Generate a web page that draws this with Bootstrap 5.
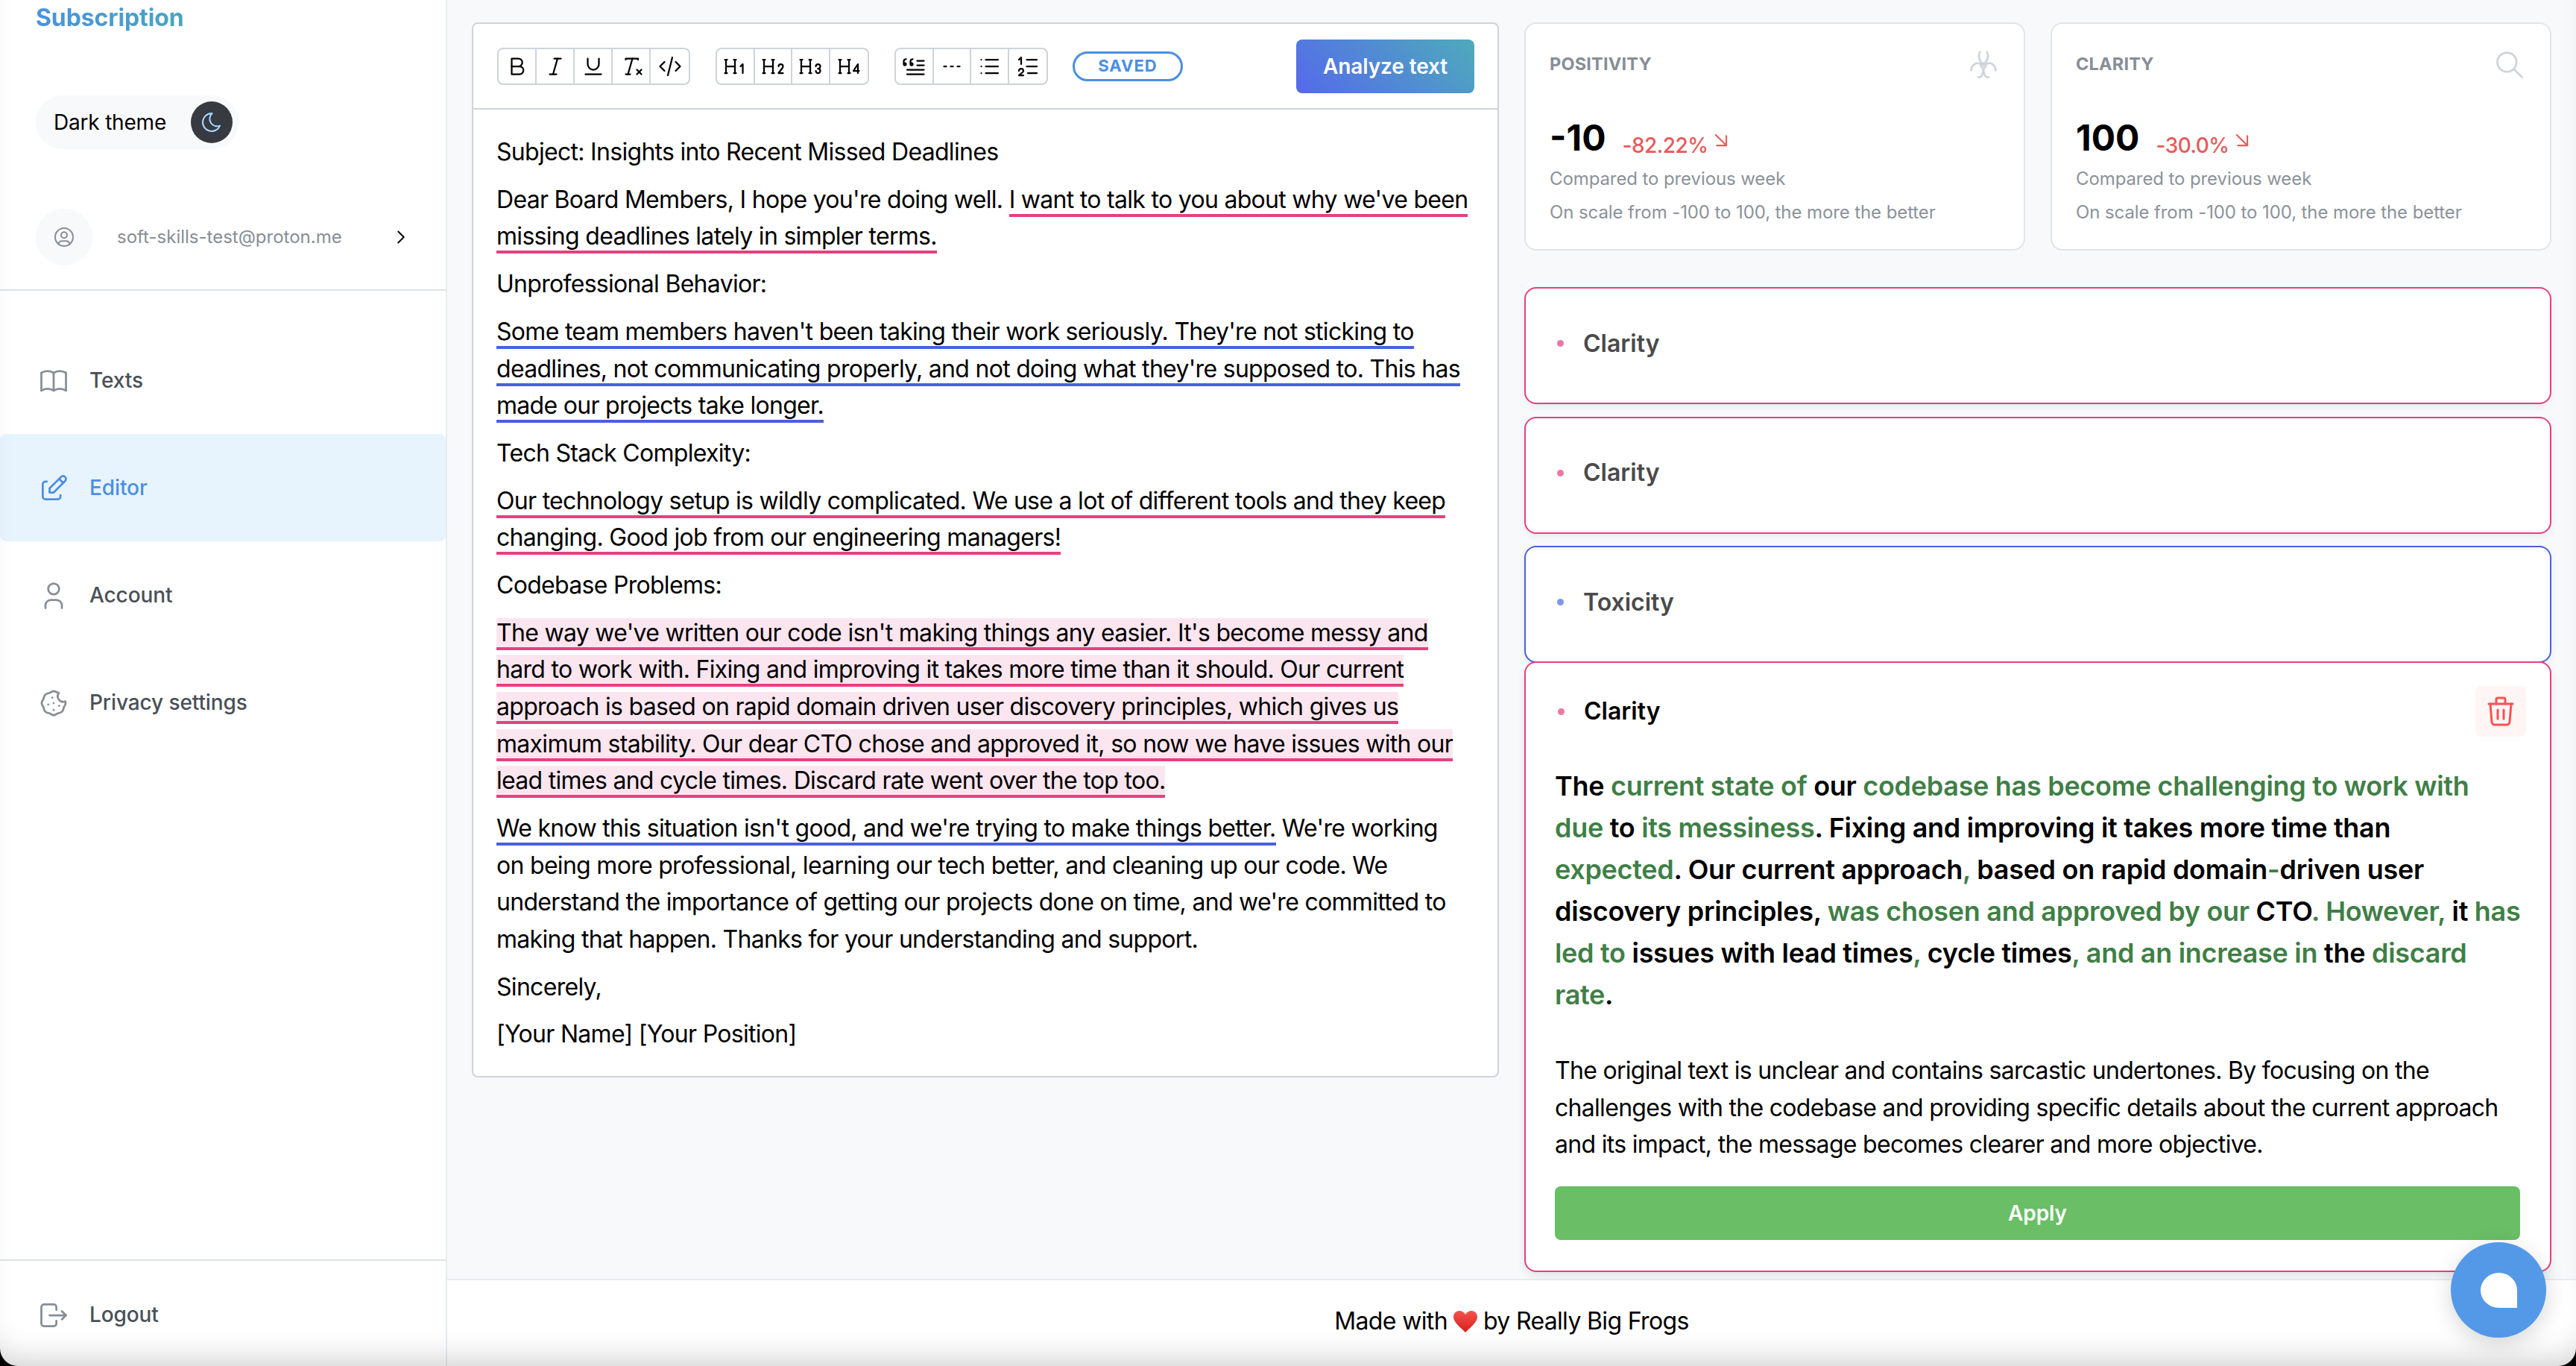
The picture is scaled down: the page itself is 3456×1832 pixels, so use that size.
<!doctype html>
<html lang="en">
<head>
<meta charset="utf-8">
<title>Editor</title>
<link href="https://cdn.jsdelivr.net/npm/bootstrap@5.3.0/dist/css/bootstrap.min.css" rel="stylesheet">
<style>
html,body{height:100%;overflow:hidden}
body{font-family:Inter,"Liberation Sans",sans-serif;font-size:32px;line-height:1.55;background:#f8f9fa;color:#000}
svg.tb{fill:none;stroke:currentColor;stroke-width:1.5;stroke-linecap:round;stroke-linejoin:round;flex:none}
.app-shell{height:1832px}
.side-bar{width:600px;flex:none;background:#fff;border-right:2px solid #e9ecef}
.sub-link{font-size:32px;font-weight:700;line-height:48px;height:46px;margin-left:48px;width:max-content;background:linear-gradient(45deg,#4a8fe2,#47a8bb);-webkit-background-clip:text;background-clip:text;color:transparent;letter-spacing:-.1px}
.theme-pill{margin:82px 0 0 48px;width:272px;height:72px;background:#f8f9fa;border-radius:36px;padding:2px 8px 0 24px;font-size:28px;letter-spacing:-.2px}
.moon-dot{width:56px;height:56px;background:#373a40;border-radius:50%;color:#a5d8ff;margin-top:-2px}
.user-row{margin:80px 0 0 48px;height:76px}
.user-dot{width:76px;height:76px;background:#f8f9fa;border-radius:50%;color:#868e96}
.user-mail{font-size:24px;color:#868e96;margin-left:33px;width:366px}
.side-head{border-bottom:2px solid #dee2e6;padding-bottom:32px}
.nav-rows{margin-top:48px}
.nav-line{height:144px;padding:2px 0 0 50px;gap:26px;font-size:28px;font-weight:500;color:#495057;text-decoration:none;border-radius:8px;letter-spacing:-.1px}
.nav-line svg{color:#868e96}
.nav-line.is-on{background:#e8f4fd;color:#4a8fe2}
.nav-line.is-on svg{color:#4a8fe2}
.side-foot{border-top:2px solid #dee2e6;height:143px}
.side-foot .nav-line{height:143px}
.work-area{padding:30px 33px 0;gap:34px;min-height:0}
.work-col{flex:1 1 0;min-width:0}
.edit-card{border:2px solid #ced4da;border-radius:8px;background:#fff}
.edit-bar{height:115px;padding:0 31px 0 32px;border-bottom:2px solid #ced4da}
.tool-set{border:2px solid #ced4da;border-radius:8px;margin-right:34px;height:50px;background:#fff}
.tool-set.end-set{margin-right:33px}
.tool-key{width:50.5px;display:flex;align-items:center;justify-content:center;border-right:2px solid #ced4da;color:#000}
.tool-key:last-child{border-right:0}
.tool-set.wide .tool-key{width:51px}
.save-tag{width:148px;height:40px;border:3px solid #4a8fe2;border-radius:20px;color:#4a8fe2;font-size:22px;font-weight:700;letter-spacing:1px;background:#fff}
.go-btn{margin-left:auto;width:239px;height:72px;border:0;border-radius:8px;color:#fff;font-size:28px;font-weight:600;background:linear-gradient(45deg,#5569ec,#4eabbb);letter-spacing:-.1px}
.edit-body{padding:32px 31px 31px;letter-spacing:-.7px}
.edit-body p{margin:0 0 14.2px}
.edit-body p:last-child{margin:0}
.hl-pink{border-bottom:4px solid #e64080}
.hl-blue{border-bottom:4px solid #4c5fdc}
.hl-fill{background:#fbe6ef}
.stat-row{gap:34px;margin-bottom:49px}
.stat-box{flex:1 1 0;height:306px;border:2px solid #e1e4e8;border-radius:16px;background:#fff;padding:32px;display:block}
.stat-head{height:44px;color:#ced4da;padding-top:1px}
.stat-name{font-size:23.5px;font-weight:700;color:#868e96;letter-spacing:.2px}
.stat-val{font-size:48px;font-weight:700;line-height:60px;margin-top:47px;gap:22px}
.stat-diff{font-size:28px;font-weight:500;color:#e85a5a;line-height:40px;letter-spacing:-.5px}
.stat-diff svg{margin:-14px 0 0 0}
.stat-note{font-size:24px;color:#8b929a;line-height:37px;margin-top:8px;letter-spacing:-.1px}
.stat-note.first{margin-top:6px}
.issue-box{border:2px solid #e64080;border-radius:16px;background:#fff;height:157px;margin-bottom:16.5px;padding:0 37px 6px 42px;font-size:32px;font-weight:600;color:#4a4a4a;box-shadow:0 4px 10px rgba(0,0,0,.06)}
.issue-box.ind{border-color:#4c5fdc;margin-bottom:-2px}
.issue-box .pip{width:9px;height:9px;border-radius:50%;background:#ee77a6;margin-right:26px}
.issue-box.ind .pip{background:#7f96ef}
.issue-open{position:relative;border:2px solid #e64080;border-radius:16px;background:#fff;height:819px;padding:31px 40px 0 39px;box-shadow:0 6px 12px rgba(0,0,0,.08);letter-spacing:-.7px}
.open-head{font-size:32px;font-weight:600;height:68px;letter-spacing:0}
.open-head .pip{width:9px;height:9px;border-radius:50%;background:#ee77a6;margin-right:26px;margin-left:4px}
.bin-btn{margin-left:auto;width:68px;height:68px;background:#fff5f5;border-radius:8px;color:#fa5252;margin-right:-8px}
.fix-text{font-size:36px;font-weight:600;line-height:56px;margin:38px -7px 49px 0;color:#000;letter-spacing:-.3px}
.fix-text span{color:#3f7f46}
.why-text{margin:0}
.ok-btn{width:100%;height:72px;margin-top:31px;border:0;border-radius:8px;background:#69be66;color:#fff;font-size:28px;font-weight:600;display:block;letter-spacing:-.1px}
.page-foot{height:117px;flex:none;background:#fff;border-top:2px solid #e9ecef;padding-bottom:5px;letter-spacing:-.65px}
.heart-ico{margin:0 7px}
.chat-bub{position:fixed;right:40px;bottom:38px;width:128px;height:128px;border-radius:50%;background:#5499e8;box-shadow:0 8px 30px rgba(0,0,0,.16);z-index:5}
.chat-bub i{display:block;width:49px;height:47px;background:#fff;border-radius:50% 50% 0 50%}
.win-edge{position:fixed;inset:0;border-radius:0 0 24px 24px;box-shadow:0 0 0 30px #000,inset 0 -34px 44px -28px rgba(0,0,0,.2);pointer-events:none;z-index:9}
</style>
</head>
<body>
<div class="app-shell d-flex">
  <aside class="side-bar d-flex flex-column">
    <div class="side-head">
      <div class="sub-link">Subscription</div>
      <div class="theme-pill d-flex align-items-center justify-content-between">
        <span>Dark theme</span>
        <span class="moon-dot d-flex align-items-center justify-content-center">
          <svg class="tb" width="32" height="32" viewBox="0 0 24 24"><path d="M12 3c.132 0 .263 0 .393 0a7.5 7.5 0 0 0 7.92 12.446a9 9 0 1 1 -8.313 -12.454z"/></svg>
        </span>
      </div>
      <div class="user-row d-flex align-items-center">
        <span class="user-dot d-flex align-items-center justify-content-center">
          <svg class="tb" width="32" height="32" viewBox="0 0 24 24"><path d="M12 12m-9 0a9 9 0 1 0 18 0a9 9 0 1 0 -18 0"/><path d="M12 10m-3 0a3 3 0 1 0 6 0a3 3 0 1 0 -6 0"/><path d="M6.168 18.849a4 4 0 0 1 3.832 -2.849h4a4 4 0 0 1 3.834 2.855"/></svg>
        </span>
        <span class="user-mail">soft-skills-test@proton.me</span>
        <svg class="tb" width="30" height="30" viewBox="0 0 24 24"><path d="M9 6l6 6l-6 6"/></svg>
      </div>
    </div>
    <nav class="nav-rows flex-grow-1">
      <a class="nav-line d-flex align-items-center" href="#"><svg class="tb" width="44" height="44" viewBox="0 0 24 24"><path d="M3 19a9 9 0 0 1 9 0a9 9 0 0 1 9 0"/><path d="M3 6a9 9 0 0 1 9 0a9 9 0 0 1 9 0"/><path d="M3 6l0 13"/><path d="M12 6l0 13"/><path d="M21 6l0 13"/></svg>Texts</a>
      <a class="nav-line is-on d-flex align-items-center" href="#"><svg class="tb" width="44" height="44" viewBox="0 0 24 24"><path d="M7 7h-1a2 2 0 0 0 -2 2v9a2 2 0 0 0 2 2h9a2 2 0 0 0 2 -2v-1"/><path d="M20.385 6.585a2.1 2.1 0 0 0 -2.97 -2.97l-8.415 8.385v3h3l8.385 -8.415z"/><path d="M16 5l3 3"/></svg>Editor</a>
      <a class="nav-line d-flex align-items-center" href="#"><svg class="tb" width="44" height="44" viewBox="0 0 24 24"><path d="M8 7a4 4 0 1 0 8 0a4 4 0 0 0 -8 0"/><path d="M6 21v-2a4 4 0 0 1 4 -4h4a4 4 0 0 1 4 4v2"/></svg>Account</a>
      <a class="nav-line d-flex align-items-center" href="#"><svg class="tb" width="44" height="44" viewBox="0 0 24 24"><path d="M8 13v.01"/><path d="M12 17v.01"/><path d="M12 12v.01"/><path d="M16 14v.01"/><path d="M11 8v.01"/><path d="M13.148 3.476l2.667 1.104a4 4 0 0 0 4.656 6.14l.053 .132a3 3 0 0 1 0 2.296c-.497 .786 -.838 1.404 -1.024 1.852c-.189 .456 -.409 1.194 -.66 2.216a3 3 0 0 1 -1.624 1.623c-1.048 .263 -1.787 .483 -2.216 .661c-.475 .197 -1.092 .538 -1.852 1.024a3 3 0 0 1 -2.296 0c-.802 -.503 -1.419 -.844 -1.852 -1.024c-.471 -.195 -1.21 -.415 -2.216 -.66a3 3 0 0 1 -1.623 -1.624c-.265 -1.052 -.485 -1.79 -.661 -2.216c-.198 -.479 -.54 -1.096 -1.024 -1.852a3 3 0 0 1 0 -2.296c.48 -.744 .82 -1.361 1.024 -1.852c.171 -.413 .391 -1.152 .66 -2.216a3 3 0 0 1 1.624 -1.623c1.032 -.256 1.77 -.476 2.216 -.661c.458 -.19 1.075 -.531 1.852 -1.024a3 3 0 0 1 2.296 0z"/></svg>Privacy settings</a>
    </nav>
    <div class="side-foot">
      <a class="nav-line d-flex align-items-center" href="#"><svg class="tb" width="44" height="44" viewBox="0 0 24 24"><path d="M14 8v-2a2 2 0 0 0 -2 -2h-7a2 2 0 0 0 -2 2v12a2 2 0 0 0 2 2h7a2 2 0 0 0 2 -2v-2"/><path d="M9 12h12l-3 -3"/><path d="M18 15l3 -3"/></svg>Logout</a>
    </div>
  </aside>
  <div class="flex-grow-1 d-flex flex-column" style="min-width:0">
    <main class="work-area flex-grow-1 d-flex">
      <section class="work-col">
        <div class="edit-card">
          <div class="edit-bar d-flex align-items-center">
            <div class="tool-set wide d-flex">
              <span class="tool-key"><svg class="tb" width="36" height="36" viewBox="0 0 24 24"><path d="M7 5h6a3.5 3.5 0 0 1 0 7h-6z"/><path d="M13 12h1a3.5 3.5 0 0 1 0 7h-7v-7"/></svg></span>
              <span class="tool-key"><svg class="tb" width="36" height="36" viewBox="0 0 24 24"><path d="M11 5l6 0"/><path d="M7 19l6 0"/><path d="M14 5l-4 14"/></svg></span>
              <span class="tool-key"><svg class="tb" width="36" height="36" viewBox="0 0 24 24"><path d="M7 5v5a5 5 0 0 0 10 0v-5"/><path d="M5 19h14"/></svg></span>
              <span class="tool-key"><svg class="tb" width="36" height="36" viewBox="0 0 24 24"><path d="M17 15l4 4m0 -4l-4 4"/><path d="M7 6v-1h11v1"/><path d="M7 19l4 0"/><path d="M13 5l-4 14"/></svg></span>
              <span class="tool-key"><svg class="tb" width="36" height="36" viewBox="0 0 24 24"><path d="M7 8l-4 4l4 4"/><path d="M17 8l4 4l-4 4"/><path d="M14 4l-4 16"/></svg></span>
            </div>
            <div class="tool-set d-flex">
              <span class="tool-key"><svg class="tb" width="36" height="36" viewBox="0 0 24 24"><path d="M19 18v-8l-2 2"/><path d="M4 6v12"/><path d="M12 6v12"/><path d="M11 18h2"/><path d="M3 18h2"/><path d="M4 12h8"/><path d="M3 6h2"/><path d="M11 6h2"/></svg></span>
              <span class="tool-key"><svg class="tb" width="36" height="36" viewBox="0 0 24 24"><path d="M17 12a2 2 0 1 1 4 0c0 .591 -.417 1.318 -.816 1.858l-3.184 4.143l4 0"/><path d="M4 6v12"/><path d="M12 6v12"/><path d="M11 18h2"/><path d="M3 18h2"/><path d="M4 12h8"/><path d="M3 6h2"/><path d="M11 6h2"/></svg></span>
              <span class="tool-key"><svg class="tb" width="36" height="36" viewBox="0 0 24 24"><path d="M19 14a2 2 0 1 0 -2 -2"/><path d="M17 16a2 2 0 1 0 2 -2"/><path d="M4 6v12"/><path d="M12 6v12"/><path d="M11 18h2"/><path d="M3 18h2"/><path d="M4 12h8"/><path d="M3 6h2"/><path d="M11 6h2"/></svg></span>
              <span class="tool-key"><svg class="tb" width="36" height="36" viewBox="0 0 24 24"><path d="M20 18v-8l-4 6h5"/><path d="M4 6v12"/><path d="M12 6v12"/><path d="M11 18h2"/><path d="M3 18h2"/><path d="M4 12h8"/><path d="M3 6h2"/><path d="M11 6h2"/></svg></span>
            </div>
            <div class="tool-set end-set d-flex">
              <span class="tool-key"><svg class="tb" width="36" height="36" viewBox="0 0 24 24"><path d="M6 15h15"/><path d="M21 19h-15"/><path d="M15 11h6"/><path d="M21 7h-6"/><path d="M9 9h1a1 1 0 1 1 -1 1v-2.5a2 2 0 0 1 2 -2"/><path d="M3 9h1a1 1 0 1 1 -1 1v-2.5a2 2 0 0 1 2 -2"/></svg></span>
              <span class="tool-key"><svg class="tb" width="36" height="36" viewBox="0 0 24 24"><path d="M5 12h2"/><path d="M17 12h2"/><path d="M11 12h2"/></svg></span>
              <span class="tool-key"><svg class="tb" width="36" height="36" viewBox="0 0 24 24"><path d="M9 6l11 0"/><path d="M9 12l11 0"/><path d="M9 18l11 0"/><path d="M5 6l0 .01"/><path d="M5 12l0 .01"/><path d="M5 18l0 .01"/></svg></span>
              <span class="tool-key"><svg class="tb" width="36" height="36" viewBox="0 0 24 24"><path d="M11 6h9"/><path d="M11 12h9"/><path d="M12 18h8"/><path d="M4 16a2 2 0 1 1 4 0c0 .591 -.5 1 -1 1.5l-3 2.5h4"/><path d="M6 10v-6l-2 2"/></svg></span>
            </div>
            <span class="save-tag d-flex align-items-center justify-content-center">SAVED</span>
            <button class="go-btn btn" type="button">Analyze text</button>
          </div>
          <div class="edit-body">
            <p>Subject: Insights into Recent Missed Deadlines</p>
            <p>Dear Board Members, I hope you're doing well. <span class="hl-pink">I want to talk to you about why we've been missing deadlines lately in simpler terms.</span></p>
            <p>Unprofessional Behavior:</p>
            <p><span class="hl-blue">Some team members haven't been taking their work seriously. They're not sticking to deadlines, not communicating properly, and not doing what they're supposed to. This has made our projects take longer.</span></p>
            <p>Tech Stack Complexity:</p>
            <p><span class="hl-pink">Our technology setup is wildly complicated. We use a lot of different tools and they keep changing. Good job from our engineering managers!</span></p>
            <p>Codebase Problems:</p>
            <p><span class="hl-pink hl-fill">The way we've written our code isn't making things any easier. It's become messy and hard to work with. Fixing and improving it takes more time than it should. Our current approach is based on rapid domain driven user discovery principles, which gives us maximum stability. Our dear CTO chose and approved it, so now we have issues with our lead times and cycle times. Discard rate went over the top too.</span></p>
            <p><span class="hl-blue">We know this situation isn't good, and we're trying to make things better.</span> We're working<br>on being more professional, learning our tech better, and cleaning up our code. We understand the importance of getting our projects done on time, and we're committed to making that happen. Thanks for your understanding and support.</p>
            <p>Sincerely,</p>
            <p>[Your Name] [Your Position]</p>
          </div>
        </div>
      </section>
      <section class="work-col">
        <div class="stat-row d-flex">
          <div class="stat-box card">
            <div class="stat-head d-flex justify-content-between align-items-center">
              <span class="stat-name">POSITIVITY</span>
              <svg class="tb" width="44" height="44" viewBox="0 0 24 24"><circle cx="12" cy="12.5" r="1.8"/><path d="M9.5 2.5c-1.5 2.6-1 5.300 1.200 8"/><path d="M14.500 2.500c1.500 2.600 1 5.300-1.200 8"/><path d="M3 16c.2-3.200 2.500-5.500 5.300-5.200 1.300.1 2.400.7 3.200 1.500"/><path d="M21 16c-.2-3.200-2.500-5.500-5.300-5.200-1.300.1-2.400.7-3.200 1.500"/><path d="M8.200 21c2.200.7 3.500-1.500 3.800-6.700.3 5.200 1.600 7.400 3.800 6.700"/></svg>
            </div>
            <div class="stat-val d-flex align-items-end"><span>-10</span><span class="stat-diff d-flex align-items-center">-82.22%<svg class="tb" width="34" height="34" viewBox="0 0 24 24"><path d="M7 7l10 10"/><path d="M17 8l0 9l-9 0"/></svg></span></div>
            <div class="stat-note first">Compared to previous week</div>
            <div class="stat-note">On scale from -100 to 100, the more the better</div>
          </div>
          <div class="stat-box card">
            <div class="stat-head d-flex justify-content-between align-items-center">
              <span class="stat-name">CLARITY</span>
              <svg class="tb" width="44" height="44" viewBox="0 0 24 24"><path d="M10 10m-7 0a7 7 0 1 0 14 0a7 7 0 1 0 -14 0"/><path d="M21 21l-6 -6"/></svg>
            </div>
            <div class="stat-val d-flex align-items-end"><span>100</span><span class="stat-diff d-flex align-items-center">-30.0%<svg class="tb" width="34" height="34" viewBox="0 0 24 24"><path d="M7 7l10 10"/><path d="M17 8l0 9l-9 0"/></svg></span></div>
            <div class="stat-note first">Compared to previous week</div>
            <div class="stat-note">On scale from -100 to 100, the more the better</div>
          </div>
        </div>
        <div class="issue-box d-flex align-items-center"><span class="pip"></span>Clarity</div>
        <div class="issue-box d-flex align-items-center"><span class="pip"></span>Clarity</div>
        <div class="issue-box ind d-flex align-items-center"><span class="pip"></span>Toxicity</div>
        <div class="issue-open">
          <div class="open-head d-flex align-items-center"><span class="pip"></span>Clarity
            <span class="bin-btn d-flex align-items-center justify-content-center"><svg class="tb" width="48" height="48" viewBox="0 0 24 24"><path d="M4 7l16 0"/><path d="M10 11l0 6"/><path d="M14 11l0 6"/><path d="M5 7l1 12a2 2 0 0 0 2 2h8a2 2 0 0 0 2 -2l1 -12"/><path d="M9 7v-3a1 1 0 0 1 1 -1h4a1 1 0 0 1 1 1v3"/></svg></span>
          </div>
          <p class="fix-text">The <span>current state of</span> our <span>codebase has become challenging to work with<br>due</span> to <span>its messiness</span>. Fixing and improving it takes more time than<br><span>expected</span>. Our current approach<span>,</span> based on rapid domain<span>-</span>driven user<br>discovery principles, <span>was chosen and approved by our</span> CTO<span>. However,</span> it <span>has<br>led to</span> issues with lead times<span>,</span> cycle times<span>, and an increase in</span> the <span>discard<br>rate</span>.</p>
          <p class="why-text">The original text is unclear and contains sarcastic undertones. By focusing on the challenges with the codebase and providing specific details about the current approach and its impact, the message becomes clearer and more objective.</p>
          <button class="ok-btn btn" type="button">Apply</button>
        </div>
      </section>
    </main>
    <footer class="page-foot d-flex align-items-center justify-content-center">Made with<svg class="heart-ico" width="34" height="30" viewBox="0 0 34 30"><defs><linearGradient id="hg" x1="0" y1="0" x2="0" y2="1"><stop offset="0" stop-color="#f5534a"/><stop offset="1" stop-color="#d81e1e"/></linearGradient></defs><path fill="url(#hg)" d="M17 30C9 22 1 16 1 9 1 4 5 1 9 1c3.500 0 6.500 2 8 5 1.500-3 4.500-5 8-5 4 0 8 3 8 8 0 7-8 13-16 21z"/></svg>by Really Big Frogs</footer>
  </div>
</div>
<div class="chat-bub d-flex align-items-center justify-content-center"><i></i></div>
<div class="win-edge"></div>
<script src="https://cdn.jsdelivr.net/npm/bootstrap@5.3.0/dist/js/bootstrap.bundle.min.js"></script>
</body>
</html>
